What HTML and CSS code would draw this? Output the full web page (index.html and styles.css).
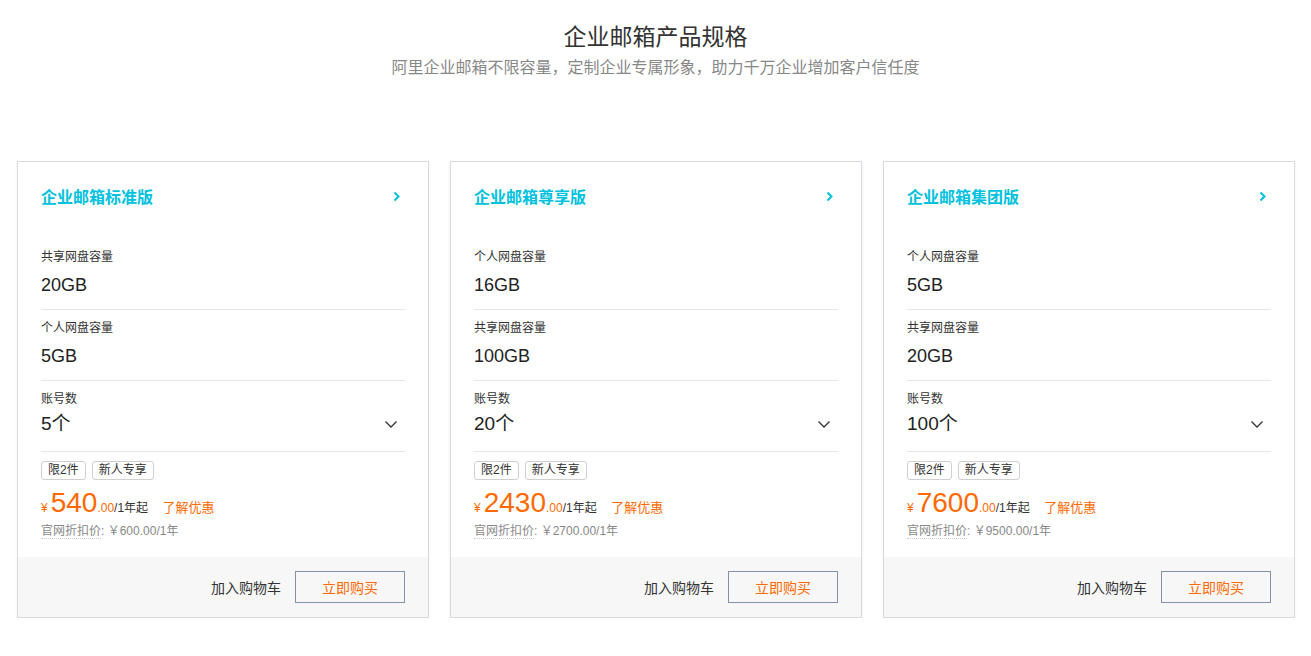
FILE: index.html
```html
<!DOCTYPE html>
<html lang="zh-CN">
<head>
    <meta charset="UTF-8">
    <meta name="viewport" content="width=device-width, initial-scale=1.0">
    <title>企业邮箱产品规格</title>
    <link rel="stylesheet" href="styles.css">
</head>
<body>
    <div class="spec-header">
        <h2 class="spec-title">企业邮箱产品规格</h2>
        <p class="spec-desc">阿里企业邮箱不限容量，定制企业专属形象，助力千万企业增加客户信任度</p>
    </div>

    <div class="card-list">
        <!-- 标准版 -->
        <div class="card">
            <div class="card-body">
                <div class="card-head">
                    <span class="card-name">企业邮箱标准版</span>
                    <svg class="arrow-right" width="7" height="11" viewBox="0 0 7 11"><path d="M1.5 1.5 L5.5 5.5 L1.5 9.5" fill="none" stroke="#00c1de" stroke-width="2"/></svg>
                </div>
                <div class="spec-row">
                    <div class="spec-label">共享网盘容量</div>
                    <div class="spec-value">20GB</div>
                </div>
                <div class="spec-row">
                    <div class="spec-label">个人网盘容量</div>
                    <div class="spec-value">5GB</div>
                </div>
                <div class="spec-row">
                    <div class="spec-label">账号数</div>
                    <div class="spec-value select">
                        <span>5个</span>
                        <svg class="arrow-down" width="14" height="9" viewBox="0 0 14 9"><path d="M1.5 1.5 L7 7 L12.5 1.5" fill="none" stroke="#333" stroke-width="1.3"/></svg>
                    </div>
                </div>
                <div class="tags">
                    <span class="tag">限2件</span>
                    <span class="tag">新人专享</span>
                </div>
                <div class="price">
                    <span class="yen">¥</span><span class="num">540</span><span class="dec">.00</span><span class="unit">/1年起</span>
                    <a class="promo">了解优惠</a>
                </div>
                <div class="origin"><span class="dotted">官网折扣价</span>: ￥600.00/1年</div>
            </div>
            <div class="card-foot">
                <span class="cart">加入购物车</span>
                <button class="buy">立即购买</button>
            </div>
        </div>

        <!-- 尊享版 -->
        <div class="card">
            <div class="card-body">
                <div class="card-head">
                    <span class="card-name">企业邮箱尊享版</span>
                    <svg class="arrow-right" width="7" height="11" viewBox="0 0 7 11"><path d="M1.5 1.5 L5.5 5.5 L1.5 9.5" fill="none" stroke="#00c1de" stroke-width="2"/></svg>
                </div>
                <div class="spec-row">
                    <div class="spec-label">个人网盘容量</div>
                    <div class="spec-value">16GB</div>
                </div>
                <div class="spec-row">
                    <div class="spec-label">共享网盘容量</div>
                    <div class="spec-value">100GB</div>
                </div>
                <div class="spec-row">
                    <div class="spec-label">账号数</div>
                    <div class="spec-value select">
                        <span>20个</span>
                        <svg class="arrow-down" width="14" height="9" viewBox="0 0 14 9"><path d="M1.5 1.5 L7 7 L12.5 1.5" fill="none" stroke="#333" stroke-width="1.3"/></svg>
                    </div>
                </div>
                <div class="tags">
                    <span class="tag">限2件</span>
                    <span class="tag">新人专享</span>
                </div>
                <div class="price">
                    <span class="yen">¥</span><span class="num">2430</span><span class="dec">.00</span><span class="unit">/1年起</span>
                    <a class="promo">了解优惠</a>
                </div>
                <div class="origin"><span class="dotted">官网折扣价</span>: ￥2700.00/1年</div>
            </div>
            <div class="card-foot">
                <span class="cart">加入购物车</span>
                <button class="buy">立即购买</button>
            </div>
        </div>

        <!-- 集团版 -->
        <div class="card">
            <div class="card-body">
                <div class="card-head">
                    <span class="card-name">企业邮箱集团版</span>
                    <svg class="arrow-right" width="7" height="11" viewBox="0 0 7 11"><path d="M1.5 1.5 L5.5 5.5 L1.5 9.5" fill="none" stroke="#00c1de" stroke-width="2"/></svg>
                </div>
                <div class="spec-row">
                    <div class="spec-label">个人网盘容量</div>
                    <div class="spec-value">5GB</div>
                </div>
                <div class="spec-row">
                    <div class="spec-label">共享网盘容量</div>
                    <div class="spec-value">20GB</div>
                </div>
                <div class="spec-row">
                    <div class="spec-label">账号数</div>
                    <div class="spec-value select">
                        <span>100个</span>
                        <svg class="arrow-down" width="14" height="9" viewBox="0 0 14 9"><path d="M1.5 1.5 L7 7 L12.5 1.5" fill="none" stroke="#333" stroke-width="1.3"/></svg>
                    </div>
                </div>
                <div class="tags">
                    <span class="tag">限2件</span>
                    <span class="tag">新人专享</span>
                </div>
                <div class="price">
                    <span class="yen">¥</span><span class="num">7600</span><span class="dec">.00</span><span class="unit">/1年起</span>
                    <a class="promo">了解优惠</a>
                </div>
                <div class="origin"><span class="dotted">官网折扣价</span>: ￥9500.00/1年</div>
            </div>
            <div class="card-foot">
                <span class="cart">加入购物车</span>
                <button class="buy">立即购买</button>
            </div>
        </div>
    </div>
</body>
</html>
```

FILE: styles.css
```css
body {
    font-family: "Liberation Sans", "Noto Sans CJK SC", sans-serif;
    margin: 0;
    padding: 0;
    background-color: #fff;
    color: #333;
}

.spec-header {
    text-align: center;
    padding-top: 21px;
}

.spec-title {
    margin: 0;
    font-size: 23px;
    font-weight: normal;
    line-height: 32px;
    color: #333;
}

.spec-desc {
    margin: 3px 0 0;
    font-size: 16px;
    line-height: 24px;
    color: #888;
}

.card-list {
    display: flex;
    gap: 21px;
    padding: 0 16px 0 17px;
    margin-top: 81px;
}

.card {
    flex: 1;
    border: 1px solid #d9d9e0;
    box-shadow: 0 2px 4px rgba(0, 0, 0, 0.05);
    background-color: #fff;
}

.card-body {
    padding: 22px 23px 17px;
}

.card-head {
    display: flex;
    align-items: center;
    justify-content: space-between;
    padding-right: 5px;
    height: 24px;
    margin-bottom: 31px;
}

.card-name {
    font-size: 16px;
    font-weight: bold;
    color: #00c1de;
}

.spec-row {
    padding: 9px 0 11px;
    border-bottom: 1px solid #e8e8e8;
}

.spec-label {
    font-size: 12px;
    line-height: 18px;
    color: #333;
}

.spec-value {
    margin-top: 6px;
    font-size: 18px;
    line-height: 26px;
    color: #222;
}

.spec-value.select {
    display: flex;
    align-items: center;
    justify-content: space-between;
    padding-right: 7px;
    margin-top: 3px;
    margin-bottom: 3px;
    font-size: 19px;
}

.tags {
    display: flex;
    gap: 6px;
    margin-top: 9px;
}

.tag {
    font-size: 12px;
    line-height: 17px;
    padding: 0 6px;
    border: 1px solid #d0d0d0;
    border-radius: 3px;
    color: #333;
}

.price {
    margin-top: 8px;
    color: #ff6a00;
    line-height: 30px;
    white-space: nowrap;
}

.yen {
    font-size: 12px;
    margin-right: 3px;
}

.num {
    font-size: 28px;
}

.dec {
    font-size: 12px;
}

.unit {
    font-size: 12px;
    color: #333;
}

.promo {
    font-size: 13px;
    margin-left: 10px;
    color: #ff6a00;
    cursor: pointer;
}

.origin {
    font-size: 12px;
    line-height: 18px;
    margin-top: -1px;
    color: #888;
}

.dotted {
    border-bottom: 1px dotted #ccc;
}

.card-foot {
    display: flex;
    justify-content: flex-end;
    align-items: center;
    gap: 14px;
    padding: 14px 23px 14px;
    background-color: #f7f7f7;
}

.cart {
    font-size: 14px;
    color: #333;
}

.buy {
    width: 110px;
    height: 32px;
    font-family: inherit;
    font-size: 14px;
    color: #ff6a00;
    background: transparent;
    border: 1px solid #8391ab;
    cursor: pointer;
}
```
